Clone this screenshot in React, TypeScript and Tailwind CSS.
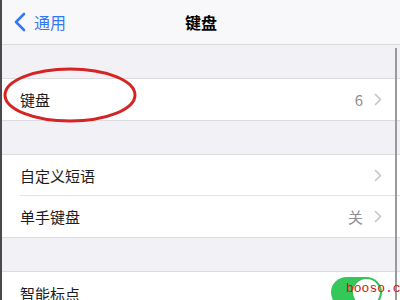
const Chevron = () => (
  <svg width="8" height="13" viewBox="0 0 8 13" fill="none" className="shrink-0">
    <path d="M1.5 1.5L6.5 6.5L1.5 11.5" stroke="#c4c4c8" strokeWidth="1.6" strokeLinecap="round" strokeLinejoin="round" />
  </svg>
);

const Row: React.FC<{ label: string; value?: string; last?: boolean }> = ({ label, value, last }) => (
  <div className="flex h-[41px] items-center bg-white pl-[18px]">
    <div className={`flex h-full flex-1 items-center pr-[18px] ${last ? "" : "border-b border-[#e2e2e6]"}`}>
      <span className="flex-1 pt-[2px] text-[15px] text-[#1c1c1e]">{label}</span>
      {value && <span className="mr-[11px] pt-[2px] text-[15px] text-[#8e8e93]">{value}</span>}
      <Chevron />
    </div>
  </div>
);

const Gap: React.FC<{ h: string }> = ({ h }) => (
  <div className={`${h} border-b border-[#dcdce0] bg-[#f2f2f6]`} />
);

export default function App() {
  return (
    <div
      className="relative h-[300px] w-[400px] overflow-hidden border-l-2 border-[#4a4a4a] bg-[#f2f2f6]"
      style={{ fontFamily: '"Noto Sans CJK SC", "Noto Sans", sans-serif' }}
    >
      <div className="grid h-[45px] grid-cols-[1fr_auto_1fr] items-center border-b border-[#dadade] bg-[#f8f8fa]">
        <div className="flex items-center gap-[8px] pl-[12px]">
          <svg width="12" height="20" viewBox="0 0 12 20" fill="none">
            <path d="M10 2L2 10L10 18" stroke="#3478f6" strokeWidth="2.6" strokeLinecap="round" strokeLinejoin="round" />
          </svg>
          <span className="text-[16px] text-[#3478f6]">通用</span>
        </div>
        <span className="text-[16px] font-bold text-black">键盘</span>
        <div />
      </div>

      <Gap h="h-[34px]" />
      <div className="border-b border-[#dcdce0]">
        <Row label="键盘" value="6" last />
      </div>
      <Gap h="h-[34px]" />
      <Row label="自定义短语" />
      <div className="border-b border-[#dcdce0]">
        <Row label="单手键盘" value="关" last />
      </div>
      <Gap h="h-[34px]" />
      <div className="flex h-[41px] items-center bg-white pl-[18px] pr-[18px]">
        <span className="flex-1 pt-[4px] text-[15px] text-[#1c1c1e]">智能标点</span>
        <div className="flex h-[31px] w-[51px] items-center justify-end rounded-full bg-[#34c759] p-[2px]">
          <div className="h-[27px] w-[27px] rounded-full bg-white shadow" />
        </div>
      </div>

      {/* scroll indicator */}
      <div className="absolute right-[3px] top-[48px] h-[260px] w-[2px] bg-[#9a9a9e]" />

      {/* red annotation ellipse */}
      <svg className="absolute left-[0px] top-[66px]" width="140" height="58" viewBox="0 0 140 58" fill="none">
        <ellipse cx="68" cy="29" rx="65" ry="26" stroke="#d42424" strokeWidth="3" />
      </svg>

      {/* watermark */}
      <span
        className="absolute left-[344px] top-[282px] text-[13px] leading-none text-[#d01010]"
        style={{ fontFamily: '"Liberation Mono", monospace' }}
      >
        booso.com
      </span>
    </div>
  );
}
